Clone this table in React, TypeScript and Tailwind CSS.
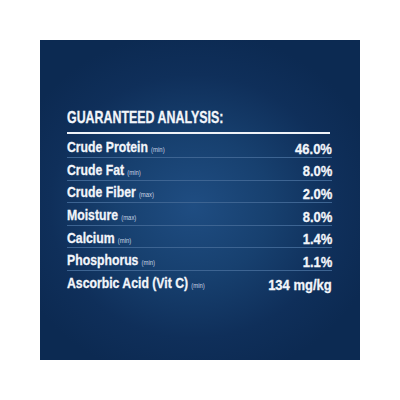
import React from "react";

const rows: [string, string, string][] = [
  ["Crude Protein", "(min)", "46.0%"],
  ["Crude Fat", "(min)", "8.0%"],
  ["Crude Fiber", "(max)", "2.0%"],
  ["Moisture", "(max)", "8.0%"],
  ["Calcium", "(min)", "1.4%"],
  ["Phosphorus", "(min)", "1.1%"],
  ["Ascorbic Acid (Vit C)", "(min)", "134 mg/kg"],
];

export default function App() {
  return (
    <div className="w-[400px] h-[400px] bg-white p-[40px]">
      <div
        className="w-[320px] h-[320px] pl-[27px] pr-[28px] pt-[68px] text-white"
        style={{
          background:
            "radial-gradient(ellipse 60% 55% at 48% 52%, #1f4d82 0%, #17406f 40%, #0f2f5a 75%, #0c2a52 100%)",
          fontFamily: '"Liberation Sans", Arial, sans-serif',
        }}
      >
        <div className="whitespace-nowrap text-[17px] font-bold leading-[20px] text-[#f2f5fa] origin-left scale-x-[0.73] [-webkit-text-stroke:0.3px_#f2f5fa]">
          GUARANTEED ANALYSIS:
        </div>
        <div className="mt-[4px] h-[2px] w-[263px] bg-[#eef2f8]" />
        <div className="pt-[1.5px]">
          {rows.map(([label, note, value], i) => (
            <div
              key={label}
              className={
                "flex h-[22.6px] items-center justify-between pt-[5px] whitespace-nowrap " +
                (i < rows.length - 1 ? "border-b border-[#3d6492]" : "")
              }
            >
              <div className="flex items-baseline text-[15.5px] font-bold leading-[18px] text-[#f2f5fa] origin-left scale-x-[0.79] [-webkit-text-stroke:0.3px_#f2f5fa]">
                <span>{label}</span>
                <span className="ml-[4px] text-[7.5px] font-normal text-[#c9d4e4] [-webkit-text-stroke:0px]">{note}</span>
              </div>
              <div className="text-[15.5px] font-bold leading-[18px] text-[#f2f5fa] origin-right scale-x-[0.84] [-webkit-text-stroke:0.3px_#f2f5fa]">
                {value}
              </div>
            </div>
          ))}
        </div>
      </div>
    </div>
  );
}
